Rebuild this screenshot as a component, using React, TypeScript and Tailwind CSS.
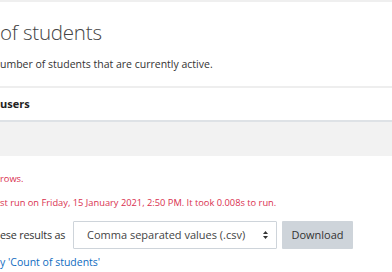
import React from 'react';

function ReportPage() {
    return (
        <div className="w-[392px] h-[272px] overflow-hidden bg-white text-[#333] font-['Open_Sans',sans-serif]">
            <div className="border-t-2 border-[#efefef] h-[86px] flex flex-col">
                <h2 className="mt-[16px] text-[20.5px] leading-[28px] font-light text-[#444] tracking-[-0.2px]">of students</h2>
                <p className="mt-[11px] text-[10.5px] leading-[14px]">umber of students that are currently active.</p>
            </div>
            <div className="border-t-2 border-[#eeeeee] h-[36px] flex items-center border-b-2 border-b-[#dee2e6]">
                <span className="text-[11px] font-bold text-[#222] pt-[1px]">users</span>
            </div>
            <div className="h-[34px] bg-[#f2f2f2]"></div>
            <div className="mt-[16px] text-[9.3px] leading-[14px] text-[#d9304f]">rows.</div>
            <div className="mt-[10px] text-[9.3px] leading-[14px] text-[#d9304f]">st run on Friday, 15 January 2021, 2:50 PM. It took 0.008s to run.</div>
            <div className="mt-[11px] flex items-center">
                <span className="text-[10.8px] w-[73px] whitespace-nowrap tracking-[-0.2px]">ese results as</span>
                <div className="w-[204px] h-[28px] border border-[#ced4da] rounded-[1px] flex items-center justify-between pl-[13px] pr-[7px] text-[11px] text-[#444]">
                    <span className="whitespace-nowrap">Comma separated values (.csv)</span>
                    <svg width="7" height="10" viewBox="0 0 7 10">
                        <path d="M3.5 1 L6 4 H1 Z" fill="#333" />
                        <path d="M3.5 9 L6 6 H1 Z" fill="#333" />
                    </svg>
                </div>
                <button className="ml-[5px] w-[71px] h-[28px] bg-[#ced4da] text-[11px] text-[#333] rounded-[1px]">Download</button>
            </div>
            <div className="mt-[6px] text-[10.5px] leading-[14px] text-[#0f6cbf]">y 'Count of students'</div>
        </div>
    );
}

export default function App() {
    return <ReportPage />;
}
